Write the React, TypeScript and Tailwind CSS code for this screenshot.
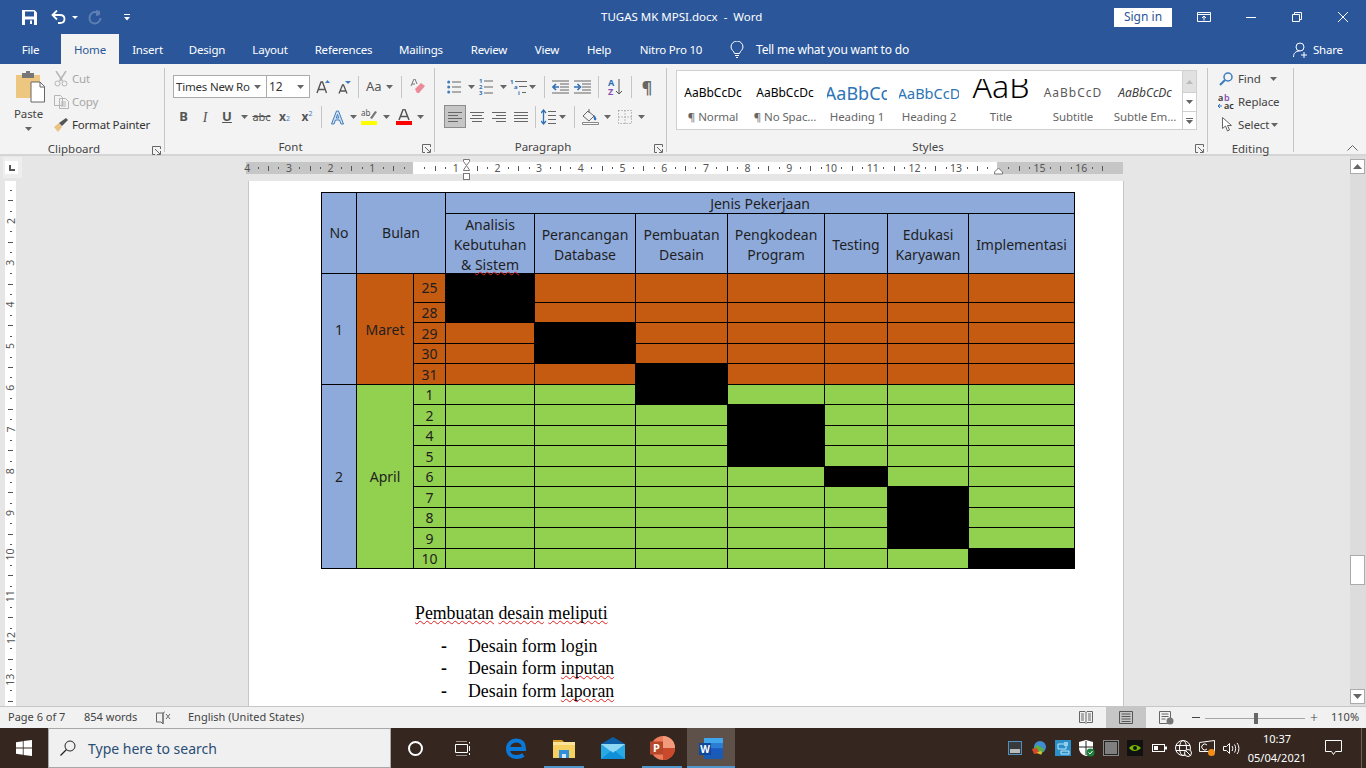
import type { ReactNode } from 'react'

const tabs = [
  { label: 'File', w: 'w-[61px]' },
  { label: 'Home', w: 'w-[58px]', active: true },
  { label: 'Insert', w: 'w-[57px]' },
  { label: 'Design', w: 'w-[62px]' },
  { label: 'Layout', w: 'w-[64px]' },
  { label: 'References', w: 'w-[83px]' },
  { label: 'Mailings', w: 'w-[72px]' },
  { label: 'Review', w: 'w-[64px]' },
  { label: 'View', w: 'w-[52px]' },
  { label: 'Help', w: 'w-[52px]' },
  { label: 'Nitro Pro 10', w: 'w-[92px]' },
]

const styleItems = [
  { label: '¶ Normal', cls: 'text-[12px] text-black', prev: 'AaBbCcDc' },
  { label: '¶ No Spac...', cls: 'text-[12px] text-black', prev: 'AaBbCcDc' },
  { label: 'Heading 1', cls: 'text-[18px] text-[#2e74b5]', prev: 'AaBbCc' },
  { label: 'Heading 2', cls: 'text-[14.5px] text-[#2e74b5]', prev: 'AaBbCcD' },
  { label: 'Title', cls: 'text-[32px] text-black font-light leading-[30px]', prev: 'AaB' },
  { label: 'Subtitle', cls: 'text-[12px] text-[#5a5a5a] tracking-[1px]', prev: 'AaBbCcD' },
  { label: 'Subtle Em...', cls: 'text-[12px] text-[#404040] italic', prev: 'AaBbCcDc' },
]

function Caret({ className = '' }: { className?: string }) {
  return (
    <svg width="7" height="4" viewBox="0 0 7 4" className={className}>
      <path d="M0 0h7L3.5 4z" fill="#666" />
    </svg>
  )
}

function Slot({ className, children }: { className: string; children?: ReactNode }) {
  return <div className={`flex h-full shrink-0 items-center justify-center ${className}`}>{children}</div>
}

function Sep({ className = '' }: { className?: string }) {
  return <div className={`h-[22px] w-px shrink-0 self-center bg-[#c6c6c6] ${className}`} />
}

function Launcher() {
  return (
    <svg width="9" height="9" viewBox="0 0 9 9" className="absolute top-[10px] right-[3px]">
      <path d="M8.5 3V.5H.5v8H3M3 3l5 5M8.5 5v3.5H5" fill="none" stroke="#666" />
    </svg>
  )
}

function Group({
  className,
  label,
  labelCls,
  launcher = true,
  children,
}: {
  className: string
  label: string
  labelCls: string
  launcher?: boolean
  children: ReactNode
}) {
  return (
    <div className={`mt-[4px] mb-[2px] flex shrink-0 flex-col border-r border-[#c6c6c6] ${className}`}>
      <div className="relative flex-1">{children}</div>
      <div className={`relative h-[18px] text-center text-[11.5px] leading-[26px] text-[#444] ${labelCls}`}>
        {label}
        {launcher && <Launcher />}
      </div>
    </div>
  )
}

function Lines({ rows, w = 14 }: { rows: [number, number][]; w?: number }) {
  return (
    <svg width={w} height="12" viewBox={`0 0 ${w} 12`}>
      {rows.map(([x, l], i) => (
        <rect key={i} x={x} y={1 + i * 3} width={l} height="1" fill="#666" />
      ))}
    </svg>
  )
}

function Bullets() {
  return (
    <svg width="14" height="14" viewBox="0 0 14 14">
      {[2, 7, 12].map((y) => (
        <g key={y}>
          <circle cx="1.7" cy={y} r="1.5" fill="#3f7cbf" />
          <rect x="5" y={y - 0.5} width="9" height="1" fill="#666" />
        </g>
      ))}
    </svg>
  )
}

function Numbered() {
  return (
    <svg width="14" height="16" viewBox="0 0 14 16" className="overflow-visible">
      {[2, 8, 14].map((y, i) => (
        <g key={y}>
          <text x="0" y={y + 2} fontSize="6" fill="#2f6fb5" fontWeight="700">
            {i + 1}
          </text>
          <rect x="5" y={y - 0.5} width="9" height="1" fill="#666" />
        </g>
      ))}
    </svg>
  )
}

function Multi() {
  return (
    <svg width="17" height="16" viewBox="0 0 17 16" className="overflow-visible">
      <text x="0" y="5" fontSize="6" fill="#2f6fb5" fontWeight="700">1</text>
      <text x="4" y="10" fontSize="6" fill="#2f6fb5" fontWeight="700">a</text>
      <text x="8" y="15.5" fontSize="6" fill="#2f6fb5" fontWeight="700">i</text>
      <rect x="5" y="2" width="12" height="1" fill="#666" />
      <rect x="9" y="7" width="8" height="1" fill="#666" />
      <rect x="12" y="13" width="4" height="1" fill="#666" />
    </svg>
  )
}

function Indent({ flip = false }: { flip?: boolean }) {
  return (
    <svg width="17" height="14" viewBox="0 0 17 14">
      <path d="M0 1h17M8 4h9M8 7h9M8 10h9M0 13h17" stroke="#666" fill="none" />
      {flip ? (
        <path d="M0 7h5M3.5 4l3 3-3 3" stroke="#2f6fb5" strokeWidth="1.6" fill="none" />
      ) : (
        <path d="M7 7H2M4 4L1 7l3 3" stroke="#2f6fb5" strokeWidth="1.6" fill="none" />
      )}
    </svg>
  )
}

function Save() {
  return (
    <svg width="15" height="15" viewBox="0 0 15 15">
      <path d="M0 0h12.5L15 2.5V15H0z" fill="#fff" />
      <rect x="3" y="1.5" width="9" height="5" fill="#2b579a" />
      <rect x="3" y="9.5" width="9" height="5.5" fill="#2b579a" />
      <rect x="8" y="10.5" width="2" height="3.5" fill="#fff" />
    </svg>
  )
}

function Undo({ dim = false }: { dim?: boolean }) {
  return dim ? (
    <svg width="14" height="15" viewBox="0 0 14 15">
      <path d="M9 2.5C5 1 1.500 4 1.500 8s3 5.500 5.500 5.500S12.500 11 12.500 8" fill="none" stroke="#5d7fb3" strokeWidth="2" />
      <path d="M8 0v6l4-1V1z" fill="#5d7fb3" />
    </svg>
  ) : (
    <svg width="15" height="14" viewBox="0 0 15 14">
      <path d="M1.500 5H9c3 0 4.500 1.800 4.500 4s-1.500 4-4.500 4H7" fill="none" stroke="#fff" strokeWidth="1.800" />
      <path d="M6 .5L1.500 5 6 9.500" fill="none" stroke="#fff" strokeWidth="1.800" />
    </svg>
  )
}

function TitleBar() {
  return (
    <div className="flex h-[34px] shrink-0 items-center bg-[#2b579a] text-white">
      <Slot className="ml-[21px] w-[16px]">
        <Save />
      </Slot>
      <Slot className="ml-[13px] w-[16px]">
        <Undo />
      </Slot>
      <Slot className="ml-[4px] w-[10px]">
        <svg width="6" height="3" viewBox="0 0 6 3">
          <path d="M0 0h6L3 3z" fill="#fff" />
        </svg>
      </Slot>
      <Slot className="ml-[7px] w-[16px]">
        <Undo dim />
      </Slot>
      <Slot className="ml-[18px] w-[12px]">
        <svg width="6" height="7" viewBox="0 0 6 7">
          <path d="M0 0h6v1H0zM0 3h6L3 6.500z" fill="#fff" />
        </svg>
      </Slot>
      <div className="ml-[468px] w-[170px] text-[11.5px] whitespace-pre">TUGAS MK MPSI.docx  -  Word</div>
      <div className="ml-[343px] flex h-[19px] w-[58px] items-center justify-center bg-white text-[12px] text-[#2b579a]">
        Sign in
      </div>
      <Slot className="ml-[18px] w-[28px]">
        <svg width="14" height="10" viewBox="0 0 14 10">
          <path d="M.5.500h13v9H.5zM.5 2.500h13M7 8.500v-4M5 6l2-2 2 2" fill="none" stroke="#fff" />
        </svg>
      </Slot>
      <Slot className="ml-[28px] w-[10px]">
        <div className="h-px w-[10px] bg-white" />
      </Slot>
      <Slot className="ml-[36px] w-[10px]">
        <svg width="10" height="10" viewBox="0 0 10 10">
          <path d="M2.500 2.500V.5h7v7h-2M.5 2.500h7v7h-7z" fill="none" stroke="#fff" />
        </svg>
      </Slot>
      <Slot className="ml-[36px] w-[10px]">
        <svg width="10" height="10" viewBox="0 0 10 10">
          <path d="M0 0l10 10M10 0L0 10" fill="none" stroke="#fff" />
        </svg>
      </Slot>
    </div>
  )
}

function TabBar() {
  return (
    <div className="flex h-[30px] shrink-0 bg-[#2b579a] text-[11.5px] tracking-[-0.2px] text-white">
      {tabs.map((t) => (
        <div
          key={t.label}
          className={`flex shrink-0 items-center justify-center pt-[1px] ${t.w} ${
            t.active ? 'bg-[#f3f3f3] text-[#2b579a]' : ''
          }`}
        >
          {t.label}
        </div>
      ))}
      <div className="ml-[13px] flex w-[190px] shrink-0 items-center pt-[1px] text-[12px] whitespace-nowrap">
        <svg width="14" height="17" viewBox="0 0 14 17" className="shrink-0">
          <path d="M4.500 12.500C4 10 1 9 1 6a6 6 0 0112 0c0 3-3 4-3.500 6.500zM5 14.500h4M6 16.500h2" fill="none" stroke="#fff" />
        </svg>
        <span className="ml-[12px]">Tell me what you want to do</span>
      </div>
      <div className="ml-[373px] flex items-center gap-[5px] pt-[1px]">
        <svg width="15" height="16" viewBox="0 0 15 16">
          <circle cx="7" cy="5" r="4" fill="none" stroke="#fff" />
          <path d="M.5 15c0-4 2.500-6 6-6M11 10v6M8 13h6" fill="none" stroke="#fff" />
        </svg>
        Share
      </div>
    </div>
  )
}

function Ribbon() {
  return (
    <div className="flex h-[92px] shrink-0 border-b-2 border-[#d5d5d5] bg-[#f3f3f3] text-[#444]">
      {/* Clipboard */}
      <Group className="w-[165px]" label="Clipboard" labelCls="pr-[16px]">
        <div className="flex">
          <div className="ml-[12px] flex w-[36px] flex-col items-center">
            <svg width="29" height="33" viewBox="0 0 29 33" className="mt-[3px]">
              <path d="M0 4h24v23H0z" fill="#edc77f" />
              <path d="M6 2h12v5H6zM10 0h4v3h-4z" fill="#777" />
              <path d="M15 11h9l4.500 4.500V31H15z" fill="#fff" stroke="#666" />
              <path d="M24 11v5h5" fill="none" stroke="#666" />
            </svg>
            <span className="mt-[2px] mr-[3px] text-[11.5px] leading-[16px] tracking-[-0.1px]">Paste</span>
            <Caret className="mt-[5px] mr-[3px]" />
          </div>
          <div className="ml-[4px] flex flex-col text-[11.5px] tracking-[-0.2px]">
            <div className="mt-[-1px] flex h-[23px] items-center gap-[4px] text-[#a6a6a6]">
              <svg width="14" height="16" viewBox="0 0 14 16" className="ml-[2px]">
                <path d="M2 0l6.500 10M12 0L5.500 10" stroke="#b5b5b5" strokeWidth="1.500" fill="none" />
                <circle cx="3.500" cy="12.500" r="2.500" fill="none" stroke="#b5b5b5" />
                <circle cx="10.500" cy="12.500" r="2.500" fill="none" stroke="#b5b5b5" />
              </svg>
              Cut
            </div>
            <div className="flex h-[23px] items-center gap-[3px] text-[#a6a6a6]">
              <svg width="15" height="14" viewBox="0 0 15 14" className="ml-[2px]">
                <path d="M.5.500h6l2 2v8h-8zM5.500 3.500h6l3 3v7h-9zM7 7h5M7 9h5M7 11h5" fill="#f3f3f3" stroke="#b5b5b5" />
              </svg>
              Copy
            </div>
            <div className="flex h-[23px] items-center gap-[3px] whitespace-nowrap text-[#333]">
              <svg width="16" height="14" viewBox="0 0 16 14" className="ml-[1px]">
                <path d="M6 5L1 9l4 5 4-5z" fill="#eac282" />
                <path d="M6 5l3 3 6-6-2-2z" fill="#555" />
              </svg>
              Format Painter
            </div>
          </div>
        </div>
      </Group>

      {/* Font */}
      <Group className="w-[270px]" label="Font" labelCls="pr-[18px]">
        <div className="mt-[7px] ml-[8px] flex h-[23px] items-stretch">
          <div className="flex w-[94px] items-center justify-between border border-[#ababab] bg-white pr-[5px] pl-[2px] text-[11.5px] tracking-[-0.2px] text-[#333]">
            <span className="whitespace-nowrap">Times New Ro</span>
            <Caret />
          </div>
          <div className="flex w-[43px] items-center justify-between border border-l-0 border-[#ababab] bg-white pr-[5px] pl-[2px] text-[12px] text-[#333]">
            12
            <Caret />
          </div>
          <Slot className="ml-[6px] w-[14px]">
            <svg width="14" height="14" viewBox="0 0 14 14">
              <path d="M1 13L5 2h1.500l4 11M2.500 9.500h6" fill="none" stroke="#555" strokeWidth="1.400" />
              <path d="M9 3l2.500-3L14 3z" fill="#3f7cbf" />
            </svg>
          </Slot>
          <Slot className="ml-[7px] w-[14px]">
            <svg width="13" height="14" viewBox="0 0 13 14">
              <path d="M1 13.500L4.500 5H5.500l3.500 8.500M2.500 11h5" fill="none" stroke="#555" strokeWidth="1.300" />
              <path d="M7 1h6l-3 3z" fill="#3f7cbf" />
            </svg>
          </Slot>
          <Sep className="ml-[7px]" />
          <div className="ml-[7px] flex items-center text-[13px] text-[#555]">Aa</div>
          <Caret className="mt-[10px] ml-[4px]" />
          <Sep className="ml-[8px]" />
          <Slot className="ml-[8px] w-[16px]">
            <svg width="15" height="15" viewBox="0 0 15 15">
              <path d="M5 10l6-6 4 3-6 7H7z" fill="#ec8a97" />
              <path d="M1 7l3-7h1l2 5M2 5h3" fill="none" stroke="#777" />
            </svg>
          </Slot>
        </div>
        <div className="mt-[7px] ml-[8px] flex h-[24px] items-center">
          <Slot className="w-[21px] text-[13px] font-bold text-[#555]">B</Slot>
          <Slot className="w-[22px] font-['Liberation_Serif',serif] text-[14px] text-[#555] italic">I</Slot>
          <Slot className="w-[22px] text-[13px] font-bold text-[#555] underline">U</Slot>
          <Slot className="w-[12px]">
            <Caret />
          </Slot>
          <Slot className="w-[23px] text-[11px] text-[#555] line-through">abc</Slot>
          <Slot className="w-[23px] text-[12px] font-bold text-[#555]">
            x<sub className="text-[7px] font-normal text-[#3f7cbf]">2</sub>
          </Slot>
          <Slot className="w-[22px] text-[12px] font-bold text-[#555]">
            x<sup className="text-[7px] font-normal text-[#3f7cbf]">2</sup>
          </Slot>
          <Sep className="ml-[3px]" />
          <Slot className="ml-[4px] w-[22px]">
            <svg width="15" height="15" viewBox="0 0 15 15">
              <path d="M1.500 14L6.500 1h2l5 13h-2.500L9.500 10h-4L4 14zM6.300 8h2.400L7.500 4.500z" fill="#cfe0f3" stroke="#3f7cbf" />
            </svg>
          </Slot>
          <Slot className="w-[10px]">
            <Caret />
          </Slot>
          <Slot className="w-[22px]">
            <svg width="16" height="16" viewBox="0 0 16 16" className="overflow-visible">
              <text x="0" y="7" fontSize="8" fill="#555">ab</text>
              <path d="M9 9l5-7 2 1-5 7z" fill="#777" />
              <rect y="12" width="16" height="4" fill="#ffff00" />
            </svg>
          </Slot>
          <Slot className="w-[12px]">
            <Caret />
          </Slot>
          <Slot className="w-[23px]">
            <svg width="16" height="16" viewBox="0 0 16 16">
              <path d="M3 11L7.300 0h1.400L13 11M4.500 7.500h7" fill="none" stroke="#555" strokeWidth="1.500" />
              <rect y="12" width="16" height="4" fill="#ff0000" />
            </svg>
          </Slot>
          <Caret className="ml-[2px]" />
        </div>
      </Group>

      {/* Paragraph */}
      <Group className="w-[232px]" label="Paragraph" labelCls="pr-[15px]">
        <div className="mt-[7px] ml-[12px] flex h-[23px] items-center">
          <Slot className="w-[14px]">
            <Bullets />
          </Slot>
          <Caret className="ml-[7px]" />
          <Slot className="ml-[4px] w-[14px]">
            <Numbered />
          </Slot>
          <Caret className="ml-[7px]" />
          <Slot className="ml-[3px] w-[17px]">
            <Multi />
          </Slot>
          <Caret className="ml-[2px]" />
          <Sep className="ml-[8px]" />
          <Slot className="ml-[7px] w-[17px]">
            <Indent />
          </Slot>
          <Slot className="ml-[5px] w-[17px]">
            <Indent flip />
          </Slot>
          <Sep className="ml-[7px]" />
          <Slot className="ml-[9px] w-[15px]">
            <svg width="15" height="18" viewBox="0 0 15 18" className="overflow-visible">
              <text x="0" y="8" fontSize="9" fontWeight="700" fill="#2f6fb5">A</text>
              <text x="0" y="17" fontSize="9" fontWeight="700" fill="#8a4fb0">Z</text>
              <path d="M11 1v15M8 13l3 3 3-3" fill="none" stroke="#555" />
            </svg>
          </Slot>
          <Sep className="ml-[8px]" />
          <Slot className="ml-[8px] w-[14px] text-[16px] font-bold text-[#666]">¶</Slot>
        </div>
        <div className="mt-[7px] ml-[9px] flex h-[23px] items-center">
          <Slot className="w-[22px] border border-[#8c8c8c] bg-[#c6c6c6]">
            <Lines rows={[[0, 14], [0, 10], [0, 14], [0, 10]]} />
          </Slot>
          <Slot className="w-[22px]">
            <Lines rows={[[0, 14], [2, 10], [0, 14], [2, 10]]} />
          </Slot>
          <Slot className="w-[22px]">
            <Lines rows={[[0, 14], [4, 10], [0, 14], [4, 10]]} />
          </Slot>
          <Slot className="w-[22px]">
            <Lines rows={[[0, 14], [0, 14], [0, 14], [0, 14]]} />
          </Slot>
          <Sep className="ml-[3px]" />
          <Slot className="ml-[3px] w-[18px]">
            <svg width="15" height="16" viewBox="0 0 15 16">
              <path d="M2.500 1v14M0 4l2.500-3L5 4M0 12l2.500 3L5 12" fill="none" stroke="#2f6fb5" strokeWidth="1.300" />
              <path d="M7 2.500h8M7 6.500h8M7 10.500h8M7 14.500h8" stroke="#666" />
            </svg>
          </Slot>
          <Caret className="ml-[2px]" />
          <Sep className="ml-[8px]" />
          <Slot className="ml-[7px] w-[17px]">
            <svg width="17" height="16" viewBox="0 0 17 16">
              <path d="M1 7l5-5 6 5-5 5z" fill="#f3f3f3" stroke="#666" />
              <path d="M7 0v4" stroke="#666" />
              <path d="M12 6c2 2 3 4 2 5s-3 0-2-5z" fill="#2f6fb5" />
              <path d="M.5 13.500h16v2H.5z" fill="#fff" stroke="#888" />
            </svg>
          </Slot>
          <Caret className="ml-[5px]" />
          <Slot className="ml-[7px] w-[14px]">
            <svg width="14" height="14" viewBox="0 0 14 14">
              <path d="M.5.500h13v13H.5zM7 .5v13M.5 7h13" fill="none" stroke="#888" strokeDasharray="1 2" />
            </svg>
          </Slot>
          <Caret className="ml-[6px]" />
        </div>
      </Group>

      {/* Styles */}
      <Group className="w-[541px]" label="Styles" labelCls="pr-[18px]">
        <div className="mt-[2px] ml-[9px] flex h-[60px] w-[521px] border border-[#d0d0d0] bg-white">
          {styleItems.map((s) => (
            <div key={s.label} className="flex w-[72px] shrink-0 flex-col items-center">
              <div className="mt-[8px] flex h-[22px] w-[60px] items-end justify-center overflow-hidden whitespace-nowrap">
                <span className={`leading-[16px] ${s.cls}`}>{s.prev}</span>
              </div>
              <div className="mt-[9px] text-[11.5px] leading-[14px] tracking-[-0.1px] whitespace-nowrap text-[#666]">{s.label}</div>
            </div>
          ))}
          <div className="ml-auto flex w-[14px] flex-col border-l border-[#d0d0d0]">
            <div className="flex h-[21px] items-center justify-center bg-[#e1e1e1]">
              <svg width="7" height="4" viewBox="0 0 7 4">
                <path d="M0 4h7L3.500 0z" fill="#bbb" />
              </svg>
            </div>
            <div className="flex h-[19px] items-center justify-center border-t border-[#d0d0d0]">
              <Caret />
            </div>
            <div className="flex flex-1 flex-col items-center justify-center border-t border-[#d0d0d0]">
              <div className="mb-[1px] h-px w-[7px] bg-[#666]" />
              <Caret />
            </div>
          </div>
        </div>
      </Group>

      {/* Editing */}
      <Group className="w-[86px]" label="Editing" labelCls="" launcher={false}>
        <div className="flex flex-col text-[11.5px] tracking-[-0.1px] text-[#444]">
          <div className="mt-[-1px] flex h-[23px] items-center">
            <svg width="14" height="14" viewBox="0 0 14 14" className="ml-[11px]">
              <circle cx="9" cy="5" r="4" fill="none" stroke="#3f7cbf" strokeWidth="1.500" />
              <path d="M6 8l-5 5" stroke="#3f7cbf" strokeWidth="2.200" />
            </svg>
            <span className="ml-[5px]">Find</span>
            <Caret className="ml-[9px]" />
          </div>
          <div className="flex h-[23px] items-center">
            <svg width="17" height="16" viewBox="0 0 17 16" className="ml-[10px] overflow-visible">
              <text x="0" y="7" fontSize="9" fontWeight="600" fill="#333">a</text>
              <text x="6" y="7" fontSize="9" fontWeight="600" fill="#8a4fb0">b</text>
              <text x="6" y="15" fontSize="9" fontWeight="600" fill="#333">ac</text>
              <path d="M4 12H1M2 10l-2 2 2 2" fill="none" stroke="#2f6fb5" />
            </svg>
            <span className="ml-[3px]">Replace</span>
          </div>
          <div className="flex h-[23px] items-center">
            <svg width="10" height="15" viewBox="0 0 10 15" className="ml-[14px]">
              <path d="M.5.500v11l3-2.500 2 5 2-1-2-4.500h4z" fill="#fff" stroke="#666" />
            </svg>
            <span className="ml-[6px]">Select</span>
            <Caret className="ml-[2px]" />
          </div>
        </div>
      </Group>

      <div className="flex flex-1 items-end justify-end pr-[8px] pb-[3px]">
        <svg width="11" height="6" viewBox="0 0 11 6">
          <path d="M.5 5.500l5-5 5 5" fill="none" stroke="#666" />
        </svg>
      </div>
    </div>
  )
}

function HRuler() {
  const cm = Array.from({ length: 21 }, (_, i) => i - 4)
  const x0 = 168
  const step = 41.7
  return (
    <svg width="877" height="25" viewBox="0 0 877 25" className="shrink-0 overflow-visible">
      <rect x="0" y="6" width="877" height="12" fill="#c6c6c6" />
      <rect x="167" y="6" width="584" height="12" fill="#fff" />
      {cm.map((n) => {
        const x = x0 + n * step
        return (
          <g key={n}>
            {n !== 0 && n !== 14 && (
              <text x={x} y="15.500" fontSize="10.500" fill="#555" textAnchor="middle">
                {Math.abs(n)}
              </text>
            )}
            <rect x={Math.round(x + step / 4)} y="11" width="1" height="2" fill="#555" />
            <rect x={Math.round(x + step / 2)} y="10" width="1" height="5" fill="#555" />
            {n < 16 && <rect x={Math.round(x + (3 * step) / 4)} y="11" width="1" height="2" fill="#555" />}
          </g>
        )
      })}
      <path d="M217.500 3.500h6v2l-3 4 3 4.500v.5h-6v-.5l3-4.500-3-4z" fill="#fff" stroke="#777" />
      <rect x="217.500" y="17.500" width="6" height="6" fill="#fff" stroke="#777" />
      <path d="M748.500 16l4-4 4 4v2h-8z" fill="#fff" stroke="#777" />
    </svg>
  )
}

function VRuler() {
  const marks = Array.from({ length: 14 }, (_, i) => i + 1)
  return (
    <svg width="11" height="525" viewBox="0 0 11 525" className="ml-[5px] shrink-0 bg-white">
      {marks.map((n) => {
        const y = 40 + (n - 2) * 41.7
        return (
          <g key={n}>
            <text
              x="5.500"
              y={y}
              fontSize="10.500"
              fill="#555"
              textAnchor="middle"
              dominantBaseline="central"
              transform={`rotate(-90 5.500 ${y})`}
            >
              {n}
            </text>
            <rect x="5" y={Math.round(y + 10.4)} width="2" height="1" fill="#555" />
            <rect x="3" y={Math.round(y + 20.8)} width="5" height="1" fill="#555" />
            <rect x="5" y={Math.round(y + 31.3)} width="2" height="1" fill="#555" />
          </g>
        )
      })}
    </svg>
  )
}

const orange = 'bg-[#c55a11]'
const green = 'bg-[#92d050]'
const blue = 'bg-[#8eaadb]'
const td = 'border border-black p-0 text-center align-middle'

// which task column is blacked out on which row, with rowspan
const rows = [
  { d: '25', h: 'h-[29px]', black: 1, span: 2 },
  { d: '28', h: 'h-[20px]', black: 0, span: 0, skip: 1 },
  { d: '29', h: 'h-[21px]', black: 2, span: 2 },
  { d: '30', h: 'h-[20px]', black: 0, span: 0, skip: 2 },
  { d: '31', h: 'h-[21px]', black: 3, span: 2 },
  { d: '1', h: 'h-[20px]', black: 0, span: 0, skip: 3 },
  { d: '2', h: 'h-[21px]', black: 4, span: 3 },
  { d: '4', h: 'h-[20px]', black: 0, span: 0, skip: 4 },
  { d: '5', h: 'h-[21px]', black: 0, span: 0, skip: 4 },
  { d: '6', h: 'h-[20px]', black: 5, span: 1 },
  { d: '7', h: 'h-[21px]', black: 6, span: 3 },
  { d: '8', h: 'h-[20px]', black: 0, span: 0, skip: 6 },
  { d: '9', h: 'h-[21px]', black: 0, span: 0, skip: 6 },
  { d: '10', h: 'h-[20px]', black: 7, span: 1 },
]

function Squiggle({ children }: { children: ReactNode }) {
  return (
    <span className="underline decoration-[#e02020] decoration-wavy decoration-1 underline-offset-1 [text-decoration-skip-ink:none]">
      {children}
    </span>
  )
}

function ScheduleTable() {
  return (
    <table className="w-[753px] table-fixed border-collapse font-['Noto_Sans',sans-serif] text-[14px] leading-[20px] text-[#1f1f1f]">
      <colgroup>
        <col className="w-[35px]" />
        <col className="w-[57px]" />
        <col className="w-[32px]" />
        <col className="w-[89px]" />
        <col className="w-[101px]" />
        <col className="w-[92px]" />
        <col className="w-[97px]" />
        <col className="w-[63px]" />
        <col className="w-[81px]" />
        <col className="w-[106px]" />
      </colgroup>
      <thead>
        <tr className="h-[21px]">
          <td rowSpan={2} className={`${td} ${blue}`}>No</td>
          <td rowSpan={2} colSpan={2} className={`${td} ${blue}`}>Bulan</td>
          <td colSpan={7} className={`${td} ${blue} pt-[2px] leading-[18px]`}>Jenis Pekerjaan</td>
        </tr>
        <tr className="h-[60px]">
          <td className={`${td} ${blue}`}>
            <div className="h-[57px]">
              Analisis
              <br />
              Kebutuhan
              <br />& <Squiggle>Sistem</Squiggle>
            </div>
          </td>
          <td className={`${td} ${blue} pt-[2px]`}>Perancangan<br />Database</td>
          <td className={`${td} ${blue} pt-[2px]`}>Pembuatan<br />Desain</td>
          <td className={`${td} ${blue} pt-[2px]`}>Pengkodean<br />Program</td>
          <td className={`${td} ${blue} pt-[2px]`}>Testing</td>
          <td className={`${td} ${blue} pt-[2px]`}>Edukasi<br />Karyawan</td>
          <td className={`${td} ${blue} pt-[2px]`}>Implementasi</td>
        </tr>
      </thead>
      <tbody>
        {rows.map((r, i) => {
          const tone = i < 5 ? orange : green
          return (
            <tr key={r.d} className={r.h}>
              {i === 0 && <td rowSpan={5} className={`${td} ${blue} pt-[1px]`}>1</td>}
              {i === 0 && <td rowSpan={5} className={`${td} ${orange} pt-[1px]`}>Maret</td>}
              {i === 5 && <td rowSpan={9} className={`${td} ${blue} pt-[1px]`}>2</td>}
              {i === 5 && <td rowSpan={9} className={`${td} ${green} pt-[1px]`}>April</td>}
              <td className={`${td} ${tone} ${i === 0 ? '' : 'pt-[1px] leading-[18px]'}`}>{r.d}</td>
              {[1, 2, 3, 4, 5, 6, 7].map((c) => {
                if (r.skip === c) return null
                if (r.black === c) return <td key={c} rowSpan={r.span} className={`${td} bg-black`} />
                return <td key={c} className={`${td} ${tone}`} />
              })}
            </tr>
          )
        })}
      </tbody>
    </table>
  )
}

function DocBody() {
  return (
    <div className="flex min-h-0 flex-1">
      <div className="w-[248px] shrink-0">
        <VRuler />
      </div>
      <div className="w-[876px] shrink-0 overflow-hidden border-x border-[#c6c6c6] bg-white pt-[11px] pl-[72px]">
        <ScheduleTable />
        <div className="mt-[33px] pl-[94px] font-['Liberation_Serif',serif] text-[17.8px] leading-[22.5px] text-black">
          <div>
            <Squiggle>Pembuatan</Squiggle> <Squiggle>desain</Squiggle> <Squiggle>meliputi</Squiggle>
          </div>
          <div className="mt-[10px] pl-[26px]">
            <div className="flex">
              <span className="w-[27px] shrink-0 font-bold">-</span>
              <span>Desain form login</span>
            </div>
            <div className="flex">
              <span className="w-[27px] shrink-0 font-bold">-</span>
              <span>
                Desain form <Squiggle>inputan</Squiggle>
              </span>
            </div>
            <div className="flex">
              <span className="w-[27px] shrink-0 font-bold">-</span>
              <span>
                Desain form <Squiggle>laporan</Squiggle>
              </span>
            </div>
          </div>
        </div>
      </div>
    </div>
  )
}

function ScrollBtn({ up = false }: { up?: boolean }) {
  return (
    <div className="flex h-[15px] w-[15px] items-center justify-center border border-[#ababab] bg-white">
      <svg width="9" height="5" viewBox="0 0 9 5">
        <path d={up ? 'M0 5h9L4.500 0z' : 'M0 0h9L4.500 5z'} fill="#666" />
      </svg>
    </div>
  )
}

function Scrollbar() {
  return (
    <div className="flex w-[16px] shrink-0 flex-col bg-[#dcdcdc] pt-[3px] pb-[2px]">
      <ScrollBtn up />
      <div className="mt-[381px] h-[30px] w-[15px] border border-[#ababab] bg-white" />
      <div className="flex-1" />
      <ScrollBtn />
    </div>
  )
}

function StatusBar() {
  return (
    <div className="flex h-[22px] shrink-0 items-center border-t border-[#c6c6c6] bg-[#f1f1f1] text-[11px] text-[#444]">
      <span className="ml-[8px] w-[76px]">Page 6 of 7</span>
      <span className="w-[72px]">854 words</span>
      <svg width="15" height="14" viewBox="0 0 15 14">
        <path d="M7 2H.5v9H5l2 2V2c1-1 2-1 2-1M7 13V2" fill="none" stroke="#666" />
        <path d="M10 3l4 5M14 3l-4 5" stroke="#666" />
      </svg>
      <span className="ml-[17px] w-[888px] whitespace-nowrap">English (United States)</span>
      <Slot className="w-[20px]">
        <svg width="14" height="13" viewBox="0 0 14 13">
          <path d="M.5.500h5.500l1 1 1-1h5.500v11H8l-1 1-1-1H.5zM7 1.500v10M2 3h3M2 5h3M2 7h3M2 9h3M9 3h3M9 5h3M9 7h3M9 9h3" fill="none" stroke="#666" />
        </svg>
      </Slot>
      <Slot className="ml-[10px] w-[40px] bg-[#c6c6c6]">
        <svg width="14" height="13" viewBox="0 0 14 13">
          <path d="M.5.500h13v12H.5zM2.500 3h9M2.500 5.500h9M2.500 8h9M2.500 10.500h9" fill="none" stroke="#555" />
        </svg>
      </Slot>
      <Slot className="ml-[10px] w-[20px]">
        <svg width="15" height="14" viewBox="0 0 15 14">
          <path d="M.5.500h11v12H.5zM2.500 3h7M2.500 5.500h7M2.500 8h4" fill="#f1f1f1" stroke="#666" />
          <circle cx="11" cy="10" r="3.500" fill="#777" />
        </svg>
      </Slot>
      <Slot className="ml-[16px] w-[8px]">
        <div className="h-px w-[8px] bg-[#444]" />
      </Slot>
      <div className="relative ml-[5px] h-[12px] w-[100px]">
        <div className="mt-[6px] h-px bg-[#a6a6a6]" />
        <div className="absolute top-[1px] left-[49px] h-[11px] w-[4px] bg-[#666]" />
      </div>
      <Slot className="ml-[5px] w-[8px] text-[14px] font-light">+</Slot>
      <span className="ml-[13px]">110%</span>
    </div>
  )
}

function Taskbar() {
  return (
    <div className="flex h-[40px] shrink-0 items-center bg-[#35271f] text-white">
      <Slot className="w-[48px]">
        <svg width="16" height="16" viewBox="0 0 16 16">
          <path d="M0 2.300l6.800-1v6.300H0zM7.600 1.100L16 0v7.600H7.600zM0 8.400h6.800v6.300l-6.800-1zM7.600 8.400H16V16l-8.400-1.100z" fill="#fff" />
        </svg>
      </Slot>
      <div className="flex h-full w-[343px] shrink-0 items-center border border-[#a8a8a8] bg-[#f0f0f0] font-['Noto_Sans',sans-serif] text-[14px] text-[#2a4d74]">
        <svg width="16" height="16" viewBox="0 0 16 16" className="ml-[11px]">
          <circle cx="10" cy="6" r="5" fill="none" stroke="#222" />
          <path d="M6.500 9.500L.5 15.500" stroke="#222" strokeWidth="1.200" />
        </svg>
        <span className="ml-[12px]">Type here to search</span>
      </div>
      <Slot className="w-[48px]">
        <div className="h-[15px] w-[15px] rounded-full border-2 border-white" />
      </Slot>
      <Slot className="w-[48px]">
        <svg width="16" height="15" viewBox="0 0 16 15">
          <path d="M1 0h11M1 15h11M.5 3.500h12v8H.5zM14.500 1v1.500M14.500 5v5M14.500 12v2" fill="none" stroke="#fff" />
        </svg>
      </Slot>
      <Slot className="ml-[5px] w-[48px]">
        <svg width="21" height="21" viewBox="0 0 21 21">
          <path d="M3 11h15C18 5 15 2.500 10.500 2.500 5.500 2.500 2 6 2 11s3.500 8 8.500 8c3 0 5-.8 7-2" fill="none" stroke="#0a78d6" strokeWidth="4" />
        </svg>
      </Slot>
      <Slot className="relative w-[48px]">
        <svg width="22" height="19" viewBox="0 0 22 19">
          <path d="M0 1h9l2 2h-11z" fill="#d79b22" />
          <path d="M0 3h22v16H0z" fill="#f6d162" />
          <path d="M0 3h22v3H0z" fill="#fbe39a" />
          <path d="M6 11h10v8H6z" fill="#2f8fd8" />
          <path d="M9 15h4v4H9z" fill="#cfe7f8" />
        </svg>
        <div className="absolute right-[4px] bottom-0 left-[4px] h-[2px] bg-[#5197cc]" />
      </Slot>
      <Slot className="ml-px w-[48px]">
        <svg width="24" height="22" viewBox="0 0 24 22">
          <path d="M0 7L12 0l12 7v3H0z" fill="#0a5fa8" />
          <path d="M0 7h24v15H0z" fill="#27a9e6" />
          <path d="M0 7l12 9 12-9z" fill="#8ed8f6" />
          <path d="M0 22l10-8 2 2 2-2 10 8z" fill="#0f8fd8" />
        </svg>
      </Slot>
      <Slot className="relative ml-px w-[48px]">
        <svg width="25" height="24" viewBox="0 0 25 24">
          <circle cx="13" cy="12" r="12" fill="#ed7d5a" />
          <path d="M13 12h12a12 12 0 01-12 12z" fill="#c9492a" />
          <path d="M13 12V0a12 12 0 0112 12z" fill="#f29a7c" />
          <rect x="0" y="5.500" width="13" height="13" fill="#b7472a" />
          <text x="3" y="16" fontSize="11" fontWeight="700" fill="#fff">P</text>
        </svg>
        <div className="absolute right-[4px] bottom-0 left-[4px] h-[2px] bg-[#5197cc]" />
      </Slot>
      <Slot className="relative ml-px w-[48px] bg-[#5e5149]">
        <svg width="24" height="21" viewBox="0 0 24 21">
          <rect x="5" y="0" width="19" height="21" fill="#1a5bb5" />
          <rect x="5" y="0" width="19" height="5.500" fill="#41a5ee" />
          <rect x="5" y="5.500" width="19" height="5" fill="#2b7cd3" />
          <rect x="5" y="10.500" width="19" height="5" fill="#185abd" />
          <rect x="0" y="5" width="12" height="12" fill="#11489c" />
          <text x="1.200" y="14.500" fontSize="10" fontWeight="700" fill="#fff">W</text>
        </svg>
        <div className="absolute right-0 bottom-0 left-0 h-[2px] bg-[#5197cc]" />
      </Slot>

      <div className="ml-[268px] flex h-full items-center">
        <Slot className="w-[24px]">
          <svg width="14" height="14" viewBox="0 0 14 14">
            <rect x=".5" y=".5" width="13" height="13" fill="#3a3a3a" stroke="#4d8fc4" />
            <rect x="2" y="8" width="10" height="4" fill="#bbb" />
          </svg>
        </Slot>
        <Slot className="w-[24px]">
          <svg width="16" height="16" viewBox="0 0 16 16">
            <circle cx="9" cy="7" r="6" fill="#3f8fd0" />
            <path d="M1 10l5-5 7 4-3 6z" fill="#5fae3c" />
            <path d="M1 9l5-1 2 5-5 1z" fill="#d8452b" />
            <path d="M5 13l5-2 1 3z" fill="#f2c12e" />
          </svg>
        </Slot>
        <Slot className="w-[24px]">
          <svg width="16" height="16" viewBox="0 0 16 16">
            <rect width="16" height="16" fill="#2b8fc9" />
            <path d="M3 4h8v5H3zM6 11h8v3H6z" fill="none" stroke="#bfe6f7" />
            <rect x="9" y="2" width="4" height="4" fill="#8fd0ee" />
          </svg>
        </Slot>
        <Slot className="w-[24px]">
          <svg width="16" height="17" viewBox="0 0 16 17">
            <path d="M7 0l7 2v6c0 4-3 7-7 8-4-1-7-4-7-8V2z" fill="#fff" />
            <path d="M7 1v14M0 7h14" stroke="#222" strokeWidth="1" />
            <circle cx="11.500" cy="12.500" r="4" fill="#188038" />
            <path d="M9.500 12.500l1.500 1.500 2.500-3" fill="none" stroke="#fff" />
          </svg>
        </Slot>
        <Slot className="w-[24px]">
          <svg width="16" height="16" viewBox="0 0 16 16">
            <rect x=".5" y=".5" width="15" height="15" fill="#222" stroke="#888" />
            <path d="M2 3h12M2 5h12M2 7h12M2 9h12M2 11h12M2 13h12" stroke="#ddd" />
          </svg>
        </Slot>
        <Slot className="w-[24px]">
          <svg width="16" height="16" viewBox="0 0 16 16">
            <rect width="16" height="16" fill="#111" />
            <path d="M2 8c3-4 8-4 12 0-4 4-9 4-12 0z" fill="#76b900" />
            <circle cx="8" cy="8" r="2" fill="#111" />
          </svg>
        </Slot>
        <Slot className="w-[24px]">
          <svg width="15" height="8" viewBox="0 0 15 8">
            <rect x=".5" y=".5" width="12" height="7" fill="none" stroke="#fff" />
            <rect x="2" y="2" width="4" height="4" fill="#fff" />
            <rect x="13" y="2.500" width="2" height="3" fill="#fff" />
          </svg>
        </Slot>
        <Slot className="w-[24px]">
          <svg width="17" height="17" viewBox="0 0 17 17">
            <circle cx="8" cy="8" r="7.500" fill="none" stroke="#fff" />
            <ellipse cx="8" cy="8" rx="3.500" ry="7.500" fill="none" stroke="#fff" />
            <path d="M1 5.500h14M1 10.500h14" stroke="#fff" />
            <circle cx="13" cy="13" r="3.500" fill="#35271f" stroke="#fff" />
            <path d="M10.500 10.500l5 5" stroke="#fff" />
          </svg>
        </Slot>
        <Slot className="w-[24px]">
          <svg width="17" height="17" viewBox="0 0 17 17">
            <path d="M.5 2.500l15-2v11h-15z" fill="none" stroke="#fff" />
            <path d="M8 5a3 3 0 100 4" fill="none" stroke="#fff" />
            <circle cx="12.500" cy="12.500" r="3.500" fill="#f28c18" />
          </svg>
        </Slot>
        <Slot className="w-[24px]">
          <svg width="17" height="13" viewBox="0 0 17 13">
            <path d="M.5 4.500h3l3-3v10l-3-3h-3zM9 4c1 1 1 4 0 5M11.500 2.500c1.500 2 1.500 6 0 8M14 1c2.500 3 2.500 8 0 11" fill="none" stroke="#fff" />
          </svg>
        </Slot>
        <div className="w-[68px] shrink-0 text-center text-[11px] leading-[19px] whitespace-nowrap">
          <div>10:37</div>
          <div>05/04/2021</div>
        </div>
        <Slot className="ml-[8px] w-[28px]">
          <svg width="17" height="16" viewBox="0 0 17 16">
            <path d="M.5.500h16v11h-6l-2 3-2-3h-6z" fill="none" stroke="#fff" />
          </svg>
        </Slot>
        <div className="ml-[14px] h-full w-px shrink-0 bg-[#6b6058]" />
      </div>
    </div>
  )
}

export default function App() {
  return (
    <div className="flex h-[768px] w-[1366px] flex-col overflow-hidden bg-[#e6e6e6] font-['Noto_Sans',sans-serif]">
      <TitleBar />
      <TabBar />
      <Ribbon />
      <div className="flex min-h-0 flex-1">
        <div className="flex min-w-0 flex-1 flex-col">
          <div className="flex h-[25px] shrink-0">
            <div className="w-[246px] shrink-0">
              <div className="mt-[1px] ml-[3px] flex h-[21px] w-[19px] items-center bg-[#eeeeee] pl-[2px]">
                <div className="flex h-[13px] w-[13px] items-center justify-center bg-white">
                  <svg width="6" height="6" viewBox="0 0 6 6">
                    <path d="M1 0v5h5" fill="none" stroke="#555" strokeWidth="2" />
                  </svg>
                </div>
              </div>
            </div>
            <HRuler />
          </div>
          <DocBody />
        </div>
        <Scrollbar />
      </div>
      <StatusBar />
      <Taskbar />
    </div>
  )
}
